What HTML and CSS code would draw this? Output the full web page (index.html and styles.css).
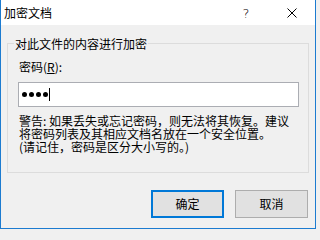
FILE: index.html
```html
<!DOCTYPE html>
<html lang="zh-CN">
<head>
<meta charset="utf-8">
<title>加密文档</title>
<link rel="stylesheet" href="styles.css">
</head>
<body>
<div class="window">
  <div class="titlebar">
    <div class="title">加密文档</div>
    <div class="tb-btn help">?</div>
    <div class="tb-btn close">
      <svg width="10" height="10" viewBox="0 0 10 10"><path d="M0.5 0.5L9.5 9.5M9.5 0.5L0.5 9.5" stroke="#000" stroke-width="1" fill="none"/></svg>
    </div>
  </div>
  <div class="content">
    <fieldset class="group">
      <legend class="legend">对此文件的内容进行加密</legend>
      <div class="group-body">
        <div class="label">密码(<u>R</u>):</div>
        <div class="input">
          <span class="dot"></span><span class="dot"></span><span class="dot"></span><span class="dot"></span><span class="caret"></span>
        </div>
        <div class="warning">警告: 如果丢失或忘记密码，则无法将其恢复。建议<br>将密码列表及其相应文档名放在一个安全位置。<br>(请记住，密码是区分大小写的。)</div>
      </div>
    </fieldset>
    <div class="buttons">
      <div class="btn default">确定</div>
      <div class="btn">取消</div>
    </div>
  </div>
</div>
</body>
</html>
```

FILE: styles.css
```css
html, body {
  margin: 0;
  padding: 0;
  background: #f0f0f0;
}
body {
  font-family: "Noto Sans CJK SC", "Noto Sans", sans-serif;
  font-size: 12px;
  color: #000;
}
.window {
  width: 316px;
  height: 229px;
  box-sizing: border-box;
  background: #f0f0f0;
  border-left: 1px solid #1c7bd0;
  border-right: 1px solid #1c7bd0;
  border-bottom: 1px solid #1c7bd0;
  display: flex;
  flex-direction: column;
}
.titlebar {
  height: 25px;
  background: #fff;
  display: flex;
  align-items: center;
  flex: none;
}
.title {
  flex: 1;
  padding-left: 3px;
  line-height: 16px;
}
.tb-btn {
  width: 46px;
  height: 25px;
  display: flex;
  align-items: center;
  justify-content: center;
}
.help {
  font-family: "DejaVu Sans", sans-serif;
  font-size: 13px;
  font-weight: 300;
  padding-top: 1px;
  box-sizing: border-box;
}
.close svg {
  display: block;
}
.content {
  padding: 0 6px;
  display: flex;
  flex-direction: column;
}
.group {
  margin: 10px 0 0 0;
  padding: 0;
  border: 1px solid #dcdcdc;
  min-width: 0;
}
.legend {
  margin-left: 6px;
  padding: 0 1px;
  line-height: 17px;
}
.group-body {
  padding: 0 9px 19px 10px;
}
.label {
  margin-top: 7px;
  margin-left: 1px;
  line-height: 16px;
}
.input {
  margin-top: 7px;
  width: 281px;
  height: 25px;
  box-sizing: border-box;
  background: #fff;
  border: 1px solid #abadb3;
  padding-left: 3px;
  display: flex;
  align-items: center;
}
.dot {
  width: 5px;
  height: 5px;
  border-radius: 50%;
  background: #000;
  margin-right: 2px;
}
.caret {
  width: 1px;
  height: 13px;
  background: #000;
  margin-left: -1px;
}
.warning {
  margin-top: 7px;
  margin-left: 1px;
  line-height: 13px;
  white-space: nowrap;
}
.buttons {
  margin-top: 17px;
  display: flex;
  justify-content: flex-end;
  gap: 11px;
  padding-right: 1px;
}
.btn {
  width: 73px;
  height: 28px;
  box-sizing: border-box;
  background: #e1e1e1;
  border: 1px solid #adadad;
  display: flex;
  align-items: center;
  justify-content: center;
  line-height: 16px;
}
.btn.default {
  border: 2px solid #0078d7;
}
```
